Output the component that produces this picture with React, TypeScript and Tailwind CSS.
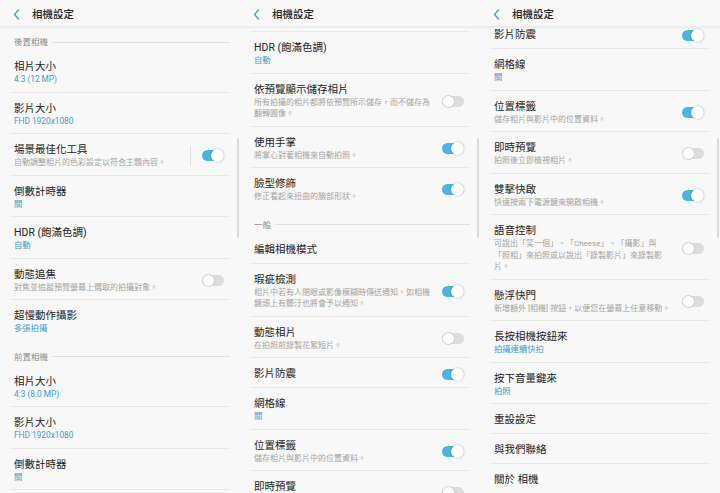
type Item =
  | { kind: 'section'; label: string }
  | {
      kind: 'row';
      title: string;
      sub?: string;
      desc?: string[];
      toggle?: boolean;
      divider?: boolean;
      last?: boolean;
    };

const panel1: Item[] = [
  { kind: 'section', label: '後置相機' },
  { kind: 'row', title: '相片大小', sub: '4:3 (12 MP)' },
  { kind: 'row', title: '影片大小', sub: 'FHD 1920x1080' },
  { kind: 'row', title: '場景最佳化工具', desc: ['自動調整相片的色彩設定以符合主題內容。'], toggle: true, divider: true },
  { kind: 'row', title: '倒數計時器', sub: '關' },
  { kind: 'row', title: 'HDR (飽滿色調)', sub: '自動' },
  { kind: 'row', title: '動態追焦', desc: ['對焦並追蹤預覽螢幕上選取的拍攝對象。'], toggle: false },
  { kind: 'row', title: '超慢動作攝影', sub: '多張拍攝', last: true },
  { kind: 'section', label: '前置相機' },
  { kind: 'row', title: '相片大小', sub: '4:3 (8.0 MP)' },
  { kind: 'row', title: '影片大小', sub: 'FHD 1920x1080' },
  { kind: 'row', title: '倒數計時器', sub: '關' },
];

const panel2: Item[] = [
  { kind: 'row', title: '倒數計時器', sub: '關' },
  { kind: 'row', title: 'HDR (飽滿色調)', sub: '自動' },
  { kind: 'row', title: '依預覽顯示儲存相片', desc: ['所有拍攝的相片都將依預覽所示儲存，而不儲存為', '翻轉圖像。'], toggle: false },
  { kind: 'row', title: '使用手掌', desc: ['將掌心對著相機來自動拍照。'], toggle: true },
  { kind: 'row', title: '臉型修飾', desc: ['修正看起來扭曲的臉部形狀。'], toggle: true, last: true },
  { kind: 'section', label: '一般' },
  { kind: 'row', title: '編輯相機模式' },
  { kind: 'row', title: '瑕疵檢測', desc: ['相片中若有人閉眼或影像模糊時傳送通知。如相機', '鏡頭上有髒汙也將會予以通知。'], toggle: true },
  { kind: 'row', title: '動態相片', desc: ['在拍照前錄製花絮短片。'], toggle: false },
  { kind: 'row', title: '影片防震', toggle: true },
  { kind: 'row', title: '網格線', sub: '關' },
  { kind: 'row', title: '位置標籤', desc: ['儲存相片與影片中的位置資料。'], toggle: true },
  { kind: 'row', title: '即時預覽', desc: ['拍照後立即檢視相片。'], toggle: false },
];

const panel3: Item[] = [
  { kind: 'row', title: '影片防震', toggle: true },
  { kind: 'row', title: '網格線', sub: '關' },
  { kind: 'row', title: '位置標籤', desc: ['儲存相片與影片中的位置資料。'], toggle: true },
  { kind: 'row', title: '即時預覽', desc: ['拍照後立即檢視相片。'], toggle: false },
  { kind: 'row', title: '雙擊快啟', desc: ['快速按兩下電源鍵來開啟相機。'], toggle: true },
  {
    kind: 'row',
    title: '語音控制',
    desc: ['可說出「笑一個」、「Cheese」、「攝影」與', '「照相」來拍照或以說出「錄製影片」來錄製影', '片。'],
    toggle: false,
  },
  { kind: 'row', title: '懸浮快門', desc: ['新增額外 [相機] 按鈕，以便您在螢幕上任意移動。'], toggle: false },
  { kind: 'row', title: '長按相機按鈕來', sub: '拍攝連續快拍' },
  { kind: 'row', title: '按下音量鍵來', sub: '拍照' },
  { kind: 'row', title: '重設設定' },
  { kind: 'row', title: '與我們聯絡' },
  { kind: 'row', title: '關於 相機' },
];

function Toggle({ on }: { on: boolean }) {
  return (
    <div
      className={
        on
          ? 'w-[22px] h-[11px] rounded-full bg-[#4ab4e6] flex items-center justify-end shrink-0'
          : 'w-[22px] h-[11px] rounded-full bg-[#dcdcdc] flex items-center justify-start shrink-0'
      }
    >
      <div
        className={
          on
            ? 'w-[13px] h-[13px] shrink-0 rounded-full bg-white shadow-[0_0_2px_rgba(0,0,0,0.3)]'
            : 'w-[13px] h-[13px] shrink-0 rounded-full bg-white border border-[#cfcfcf]'
        }
      />
    </div>
  );
}

function Row({ item }: { item: Extract<Item, { kind: 'row' }> }) {
  return (
    <div
      className={
        item.last
          ? 'mx-[10px] pl-[4px] pr-[6px] pt-[9px] pb-[7px] flex items-center'
          : 'mx-[10px] pl-[4px] pr-[6px] pt-[9px] pb-[6px] flex items-center border-b border-[#e8e8e8]'
      }
    >
      <div className="flex-1 min-w-0">
        <div className="text-[10.5px] leading-[14px] text-[#222] whitespace-nowrap">{item.title}</div>
        {item.sub && (
          <div className="text-[8.3px] leading-[11.5px] text-[#3d9ec8] whitespace-nowrap">{item.sub}</div>
        )}
        {item.desc &&
          item.desc.map((line, i) => (
            <div key={i} className="text-[8px] leading-[11.5px] text-[#a3a3a3] whitespace-nowrap">
              {line}
            </div>
          ))}
      </div>
      {item.divider && <div className="w-px h-[20px] bg-[#e2e2e2] mr-[11px]" />}
      {item.toggle !== undefined && <Toggle on={item.toggle} />}
    </div>
  );
}

function Section({ label }: { label: string }) {
  return (
    <div className="mx-[10px] pl-[4px] pt-[10px] pb-[4px] h-[24px] flex items-center gap-[4px]">
      <span className="text-[8.5px] leading-[10px] text-[#8c8c8c] whitespace-nowrap">{label}</span>
      <div className="flex-1 h-px bg-[#e2e2e2]" />
    </div>
  );
}

function Panel({ items, offset }: { items: Item[]; offset: string }) {
  return (
    <div className="relative w-[240px] h-[493px] bg-[#f8f8f8] flex flex-col overflow-hidden">
      <div className="h-[27px] shrink-0 flex items-center gap-[12px] pl-[13px] pt-[3px] bg-[#f8f8f8] border-b border-[#ececec] shadow-[0_1px_2px_rgba(0,0,0,0.05)] z-10">
        <svg width="7" height="11" viewBox="0 0 7 11" fill="none">
          <path d="M5.5 1 L1.5 5.5 L5.5 10" stroke="#3d9ec8" strokeWidth="1.2" strokeLinecap="round" strokeLinejoin="round" />
        </svg>
        <span className="text-[10.5px] leading-[14px] font-medium text-[#222]">相機設定</span>
      </div>
      <div className="flex-1 overflow-hidden">
        <div className={offset}>
          {items.map((item, i) =>
            item.kind === 'section' ? <Section key={i} label={item.label} /> : <Row key={i} item={item} />
          )}
        </div>
      </div>
      <div className="absolute right-[1px] top-[138px] w-[2px] h-[100px] rounded-full bg-[#dadada]" />
    </div>
  );
}

export default function App() {
  return (
    <div className="w-[720px] h-[493px] flex bg-[#f8f8f8] font-['Roboto','Noto_Sans_CJK_TC',sans-serif] overflow-hidden">
      <Panel items={panel1} offset="mt-0" />
      <Panel items={panel2} offset="-mt-[36.5px]" />
      <Panel items={panel3} offset="-mt-[8px]" />
    </div>
  );
}
